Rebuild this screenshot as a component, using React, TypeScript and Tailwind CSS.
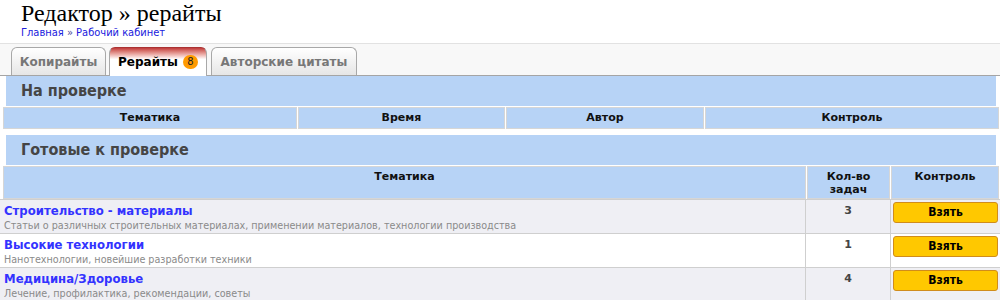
import React from "react";

const rows = [
    {
        title: "Строительство - материалы",
        desc: "Статьи о различных строительных материалах, применении материалов, технологии производства",
        count: 3,
        bg: "bg-[#efeff4]",
    },
    {
        title: "Высокие технологии",
        desc: "Нанотехнологии, новейшие разработки техники",
        count: 1,
        bg: "bg-white",
    },
    {
        title: "Медицина/Здоровье",
        desc: "Лечение, профилактика, рекомендации, советы",
        count: 4,
        bg: "bg-[#efeff4]",
    },
];

function Section({ title }: { title: string }) {
    return (
        <div className="ml-[6px] w-[990px] h-[30px] bg-[#b7d3f6] pl-[15px] text-[16px] font-bold leading-[30px] text-[#454545]">
            {title}
        </div>
    );
}

export default function App() {
    return (
        <div className="w-[1000px] h-[300px] overflow-hidden bg-white text-[#333] font-['DejaVu_Sans_Condensed',sans-serif]">
            {/* Header */}
            <div className="h-[44px] border-b border-[#e2e2e2] pl-[21px]">
                <h1 className="font-['Liberation_Serif',serif] text-[24px] leading-[26px] text-black">Редактор » рерайты</h1>
                <div className="text-[11px] leading-[13px] text-[#2020dd]">
                    Главная <span className="text-[#4a4a9a]">»</span> Рабочий кабинет
                </div>
            </div>

            {/* Tabs */}
            <div className="h-[32px] bg-[#f8f8f8] border-b border-[#a5a5a5] flex items-end pl-[11px] font-['DejaVu_Sans',sans-serif]">
                <div className="mr-[3px] h-[28px] w-[95px] rounded-t-[6px] border border-b-0 border-[#a8a8a8] bg-gradient-to-b from-white to-[#e6e6e6] flex items-center justify-center text-[12px] font-bold text-[#777]">
                    Копирайты
                </div>
                <div className="mr-[4px] h-[29px] w-[98px] -mb-px rounded-t-[6px] border border-b-0 border-[#a8a8a8] border-t-[#a33] bg-gradient-to-b from-[#c0393b] via-white via-40% to-white flex items-center justify-center gap-[5px] text-[12px] font-bold text-black">
                    Рерайты
                    <span className="w-[15px] h-[14px] rounded-full bg-[#ff9a00] text-[10px] font-normal leading-[14px] text-center text-[#222]">8</span>
                </div>
                <div className="h-[28px] w-[146px] rounded-t-[6px] border border-b-0 border-[#a8a8a8] bg-gradient-to-b from-white to-[#e6e6e6] flex items-center justify-center text-[12px] font-bold text-[#777]">
                    Авторские цитаты
                </div>
            </div>

            {/* На проверке */}
            <Section title="На проверке" />
            <div className="mt-[1px] flex pl-[3px] gap-[1px] h-[22px] text-[11px] font-bold text-[#111] font-['DejaVu_Sans',sans-serif]">
                {[
                    ["Тематика", "w-[294px]"],
                    ["Время", "w-[207px]"],
                    ["Автор", "w-[198px]"],
                    ["Контроль", "w-[294px]"],
                ].map(([label, w]) => (
                    <div key={label} className={`${w} h-full border border-[#d6d6d6] bg-[#b7d3f6] text-center leading-[20px]`}>
                        {label}
                    </div>
                ))}
            </div>

            {/* Готовые к проверке */}
            <div className="mt-[6px]">
                <Section title="Готовые к проверке" />
            </div>
            <div className="mt-[1px] flex pl-[3px] gap-[1px] h-[33px] text-[11px] font-bold leading-[13px] text-[#111] font-['DejaVu_Sans',sans-serif]">
                <div className="w-[803px] border border-[#d6d6d6] bg-[#b7d3f6] text-center pt-[3px]">Тематика</div>
                <div className="w-[83px] border border-[#d6d6d6] bg-[#b7d3f6] text-center pt-[3px]">
                    Кол-во
                    <br />
                    задач
                </div>
                <div className="w-[108px] border border-[#d6d6d6] bg-[#b7d3f6] text-center pt-[3px]">Контроль</div>
            </div>

            <div className="border-t border-[#cfcfcf]">
                {rows.map((r) => (
                    <div key={r.title} className={`flex h-[34px] border-b border-[#cfcfcf] ${r.bg}`}>
                        <div className="w-[806px] border-r border-[#cfcfcf] pl-[4px] pt-[3px]">
                            <div className="text-[13px] font-bold leading-[16px] text-[#3333ff]">{r.title}</div>
                            <div className="text-[10.7px] leading-[13px] text-[#8a8a8a]">{r.desc}</div>
                        </div>
                        <div className="w-[85px] border-r border-[#cfcfcf] text-center pt-[4px] text-[11px] font-bold leading-[13px] text-[#444] font-['DejaVu_Sans',sans-serif]">
                            {r.count}
                        </div>
                        <div className="w-[109px] pl-[2px] pt-[2px]">
                            <button className="block w-[105px] h-[21px] rounded-[3px] border border-[#d08c1c] bg-[#ffc800] text-[12px] font-bold text-black leading-[19px]">
                                Взять
                            </button>
                        </div>
                    </div>
                ))}
            </div>
        </div>
    );
}
